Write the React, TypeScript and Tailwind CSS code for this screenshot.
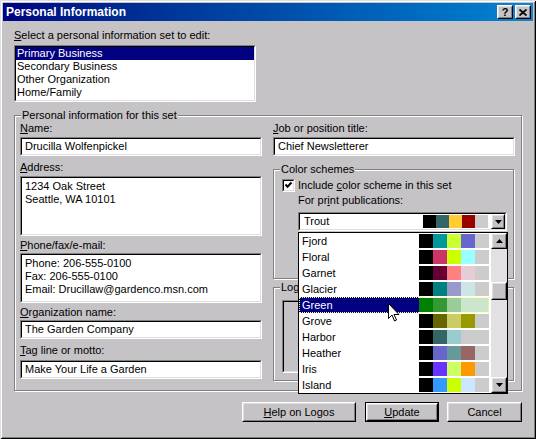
import type { ReactNode } from 'react'
import clsx from 'clsx'

const schemes = [
  { name: 'Fjord', colors: ['#000000', '#009999', '#ccff33', '#6666cc', '#cccccc'] },
  { name: 'Floral', colors: ['#000000', '#cc3366', '#ccff00', '#99ffff', '#cccccc'] },
  { name: 'Garnet', colors: ['#000000', '#660033', '#ff8080', '#e6ccd6', '#cccccc'] },
  { name: 'Glacier', colors: ['#000000', '#008080', '#9999cc', '#cce6e6', '#cccccc'] },
  { name: 'Green', colors: ['#008000', '#339933', '#99cc99', '#cce6cc', '#cce6cc'] },
  { name: 'Grove', colors: ['#000000', '#666600', '#cccc66', '#999900', '#cccccc'] },
  { name: 'Harbor', colors: ['#000000', '#336666', '#99cccc', '#cccccc', '#cccccc'] },
  { name: 'Heather', colors: ['#000000', '#6666cc', '#669999', '#996666', '#cccccc'] },
  { name: 'Iris', colors: ['#000000', '#6633ff', '#ccff66', '#ff9900', '#cccccc'] },
  { name: 'Island', colors: ['#000000', '#3399ff', '#ccff00', '#cce6ff', '#cccccc'] },
]

const trout = ['#000000', '#336666', '#ffcc33', '#990000', '#cccccc']

function U({ children }: { children: ReactNode }) {
  return <span className="underline underline-offset-[1px]">{children}</span>
}

function Sunken({ className, bg = 'bg-white', children }: { className?: string, bg?: string, children?: ReactNode }) {
  return (
    <div className={clsx('border border-t-[#808080] border-l-[#808080] border-r-white border-b-white', className)}>
      <div className={clsx('h-full w-full border border-t-black border-l-black border-r-[#dfdfdf] border-b-[#dfdfdf]', bg)}>
        {children}
      </div>
    </div>
  )
}

function Raised({ className, children }: { className?: string, children?: ReactNode }) {
  return (
    <div className={clsx('border border-t-white border-l-white border-r-black border-b-black', className)}>
      <div className="flex h-full w-full items-center justify-center border border-t-[#dfdfdf] border-l-[#dfdfdf] border-r-[#808080] border-b-[#808080] bg-[#c6c3c6]">
        {children}
      </div>
    </div>
  )
}

function Group({ label, className, children }: { label: ReactNode, className?: string, children?: ReactNode }) {
  return (
    <div className={clsx('relative border border-[#808080] shadow-[inset_1px_1px_0_#fff,1px_1px_0_#fff]', className)}>
      <span className="absolute left-[6px] top-[-7px] bg-[#c6c3c6] px-[1px] leading-[13px]">{label}</span>
      {children}
    </div>
  )
}

function Label({ className, children }: { className?: string, children: ReactNode }) {
  return <div className={clsx('h-[13px] leading-[13px]', className)}>{children}</div>
}

function Field({ className, lines }: { className?: string, lines: string[] }) {
  return (
    <Sunken className={className}>
      <div className={clsx('pl-[3px] leading-[13px]', lines.length > 1 ? 'pt-[2px]' : 'pt-[1px]')}>
        {lines.map(l => <div key={l}>{l}</div>)}
      </div>
    </Sunken>
  )
}

function Arrow({ up }: { up?: boolean }) {
  return (
    <svg width="7" height="4" viewBox="0 0 7 4">
      <polygon points={up ? '0,4 7,4 3.5,0' : '0,0 7,0 3.5,4'} fill="#000" />
    </svg>
  )
}

function TitleBar() {
  return (
    <div className="flex h-[18px] items-center bg-linear-to-r from-[#000080] to-[#1084d0] pl-[3px] pr-[2px]">
      <div className="flex-1 text-[12px] font-bold text-white">Personal Information</div>
      <div className="flex gap-[2px]">
        <Raised className="h-[14px] w-[16px]">
          <span className="text-[11px] font-bold leading-none">?</span>
        </Raised>
        <Raised className="h-[14px] w-[16px]">
          <svg width="8" height="7" viewBox="0 0 8 7">
            <path d="M0.5 0.5 L7.5 6.5 M7.5 0.5 L0.5 6.5" stroke="#000" strokeWidth="1.7" />
          </svg>
        </Raised>
      </div>
    </div>
  )
}

function DropList() {
  return (
    <div className="absolute left-[298px] top-[232px] flex h-[162px] w-[210px] border border-black bg-white">
      <div className="flex w-[192px] flex-col">
        {schemes.map(s => {
          const selected = s.name === 'Green'
          return (
            <div key={s.name} className="relative flex h-[16px]">
              <div className={clsx('w-[120px] pl-[3px] leading-[16px]', selected ? 'bg-[#000080] text-white' : '')}>{s.name}</div>
              <div className="flex items-center">
                {s.colors.map((c, i) => (
                  <div key={i} className="h-[14px] w-[14px]" style={{ backgroundColor: c }} />
                ))}
              </div>
              {selected && (
                <div className="absolute inset-x-0 inset-y-0 w-[190px] border border-dotted border-[#ffff80]" />
              )}
            </div>
          )
        })}
      </div>
      <div className="ml-auto flex w-[16px] flex-col bg-[#e2e0e2]">
        <Raised className="h-[16px] w-[16px]"><Arrow up /></Raised>
        <div className="h-[33px]" />
        <Raised className="h-[18px] w-[16px]" />
        <div className="flex-1" />
        <Raised className="h-[16px] w-[16px]"><Arrow /></Raised>
      </div>
    </div>
  )
}

function Cursor() {
  return (
    <svg className="absolute left-[388px] top-[303px]" width="12" height="19" viewBox="0 0 12 19">
      <path d="M0.5 0.5 L0.5 15.5 L4 12 L6.5 18 L8.5 17 L6 11.5 L11 11.5 Z" fill="#fff" stroke="#000" strokeWidth="1" />
    </svg>
  )
}

export default function App() {
  return (
    <div className="relative h-[439px] w-[536px] bg-[#c6c3c6] p-[3px] font-['Liberation_Sans',Arial,sans-serif] text-[11px] text-black shadow-[inset_1px_1px_0_#dfdfdf,inset_-1px_-1px_0_#000,inset_2px_2px_0_#fff,inset_-2px_-2px_0_#808080]">
      <TitleBar />
      <div className="px-[11px]">
        <Label className="mt-[8px]"><U>S</U>elect a personal information set to edit:</Label>
        <Sunken className="mt-[3px] h-[57px] w-[242px]">
          {['Primary Business', 'Secondary Business', 'Other Organization', 'Home/Family'].map((item, i) => (
            <div key={item} className={clsx('h-[13px] pl-[1px] leading-[13px]', i === 0 && 'bg-[#000080] text-white')}>{item}</div>
          ))}
        </Sunken>

        <Group label="Personal information for this set" className="mt-[13px] h-[276px] w-[508px]">
          <div className="flex gap-[11px] pl-[5px] pt-[6px]">
            <div className="flex w-[242px] flex-col">
              <Label><U>N</U>ame:</Label>
              <Field className="mt-[2px] h-[19px]" lines={['Drucilla Wolfenpickel']} />
              <Label className="mt-[5px]"><U>A</U>ddress:</Label>
              <Field className="mt-[2px] h-[60px]" lines={['1234 Oak Street', 'Seattle, WA 10101']} />
              <Label className="mt-[3px]"><U>P</U>hone/fax/e-mail:</Label>
              <Field className="mt-[1px] h-[50px]" lines={['Phone: 206-555-0100', 'Fax: 206-555-0100', 'Email: Drucillaw@gardenco.msn.com']} />
              <Label className="mt-[3px]"><U>O</U>rganization name:</Label>
              <Field className="mt-[1px] h-[19px]" lines={['The Garden Company']} />
              <Label className="mt-[5px]"><U>T</U>ag line or motto:</Label>
              <Field className="mt-[3px] h-[19px]" lines={['Make Your Life a Garden']} />
            </div>

            <div className="flex w-[242px] flex-col">
              <Label><U>J</U>ob or position title:</Label>
              <Field className="mt-[2px] h-[19px]" lines={['Chief Newsletterer']} />

              <Group label="Color schemes" className="mt-[13px] h-[110px] w-[241px]">
                <div className="pl-[8px] pt-[9px]">
                  <div className="flex h-[13px] items-center">
                    <Sunken className="h-[13px] w-[13px]">
                      <svg width="9" height="9" viewBox="0 0 9 9">
                        <path d="M1.5 3.5 L3.5 5.7 L7.5 1.5" fill="none" stroke="#000" strokeWidth="2" />
                      </svg>
                    </Sunken>
                    <span className="ml-[3px] leading-[13px]">Include <U>c</U>olor scheme in this set</span>
                  </div>
                  <Label className="ml-[16px] mt-[2px]">For pr<U>i</U>nt publications:</Label>
                  <Sunken className="ml-[16px] mt-[5px] h-[19px] w-[209px]">
                    <div className="flex h-full items-center">
                      <div className="flex-1 pl-[4px] leading-[15px]">Trout</div>
                      {trout.map((c, i) => (
                        <div key={i} className="h-[13px] w-[13px]" style={{ backgroundColor: c }} />
                      ))}
                      <Raised className="ml-[3px] h-full w-[14px]"><Arrow /></Raised>
                    </div>
                  </Sunken>
                </div>
              </Group>

              <Group label="Logos" className="mt-[8px] h-[94px] w-[241px]">
                <div className="pl-[8px] pt-[12px]">
                  <Sunken className="h-[73px] w-[223px]" bg="bg-[#c6c3c6]" />
                </div>
              </Group>
            </div>
          </div>
        </Group>

        <div className="mt-[11px] flex w-[508px] justify-end">
          <Raised className="h-[20px] w-[114px]"><span><U>H</U>elp on Logos</span></Raised>
          <div className="ml-[9px] h-[20px] w-[74px] border border-black">
            <Raised className="h-full w-full"><span><U>U</U>pdate</span></Raised>
          </div>
          <Raised className="ml-[8px] h-[20px] w-[75px]"><span>Cancel</span></Raised>
        </div>
      </div>
      <DropList />
      <Cursor />
    </div>
  )
}
